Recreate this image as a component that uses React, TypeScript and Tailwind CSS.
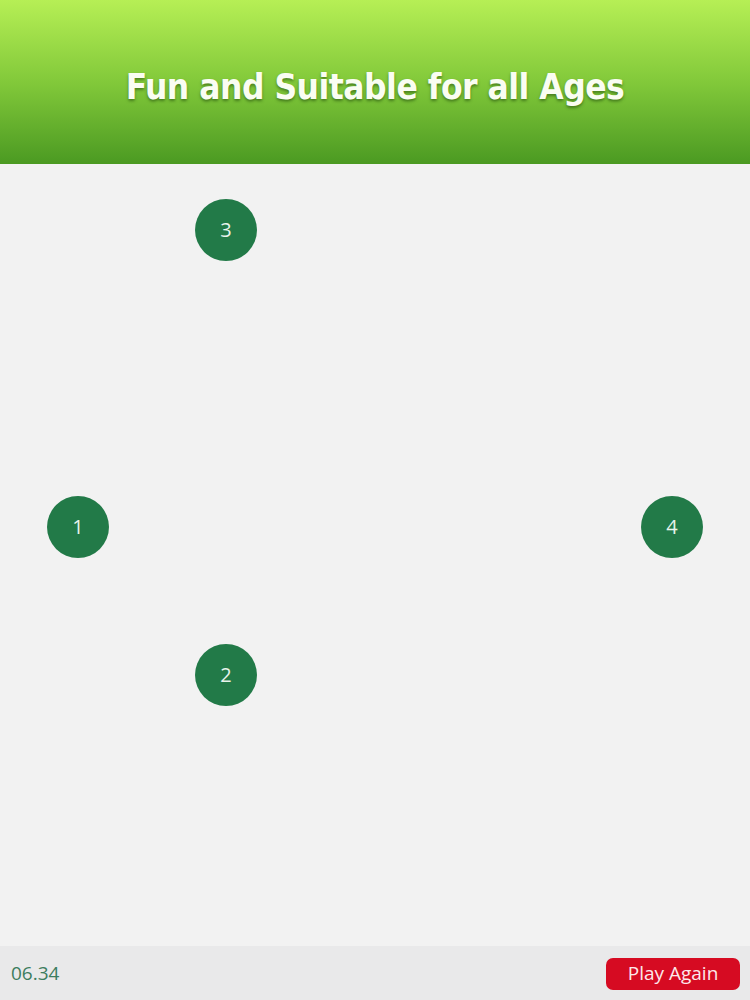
const NODES = [
  { n: 3, x: 226, y: 230 },
  { n: 1, x: 78, y: 527 },
  { n: 4, x: 672, y: 527 },
  { n: 2, x: 226, y: 675 },
];

export default function App() {
  return (
    <div className="w-[750px] h-[1000px] flex flex-col bg-[#f2f2f2] font-['Open_Sans',sans-serif]">
      {/* Header */}
      <div className="h-[164px] shrink-0 flex items-center justify-center bg-gradient-to-b from-[#b6ef55] via-[#82c93a] to-[#4b9a22]">
        <h1 className="pt-[10px] text-[35px] font-bold text-[#fafdf2] tracking-[-0.5px] font-['DejaVu_Sans_Condensed','DejaVu_Sans',sans-serif] [font-stretch:condensed] [text-shadow:0_2px_3px_rgba(30,70,10,0.55)]">
          Fun and Suitable for all Ages
        </h1>
      </div>

      {/* Board */}
      <div className="relative flex-1">
        {NODES.map((node) => (
          <div
            key={node.n}
            className="absolute size-[62px] -ml-[31px] rounded-full bg-[#227a48] flex items-center justify-center text-[20px] text-[#e8f3ec]"
            style={{ left: node.x, top: node.y - 164 - 31 }}
          >
            {node.n}
          </div>
        ))}
      </div>

      {/* Footer */}
      <div className="h-[54px] shrink-0 bg-[#e9e9ea] flex items-center justify-between pl-[11px] pr-[10px]">
        <span className="text-[19px] text-[#3c7d5e]">06.34</span>
        <button className="h-[32px] w-[134px] mt-[1px] rounded-[7px] bg-[#d60b22] text-[19px] text-[#fde8ea]">
          Play Again
        </button>
      </div>
    </div>
  );
}
